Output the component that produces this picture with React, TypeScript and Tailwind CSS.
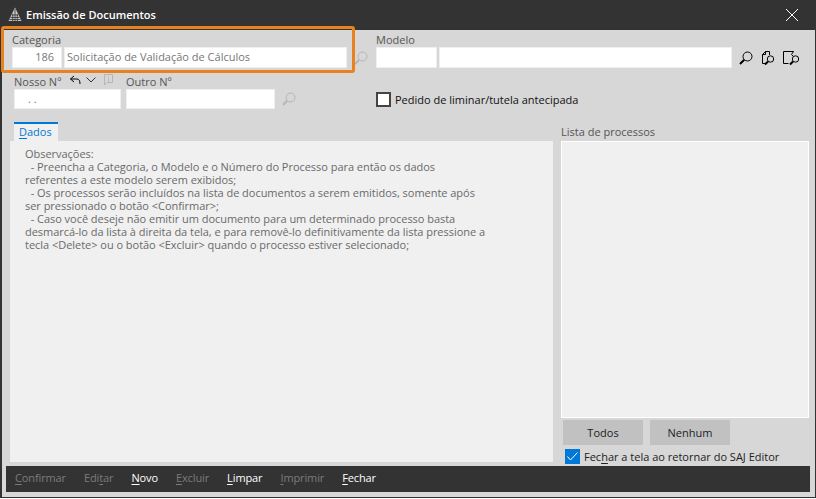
import React from "react";

const font = { fontFamily: '"Open Sans", "Noto Sans", sans-serif' };

function Lens({ className, color = "#000" }: { className?: string; color?: string }) {
  return (
    <svg width="14" height="14" viewBox="0 0 14 14" fill="none" stroke={color} className={className}>
      <circle cx="8.5" cy="5.5" r="4.5" strokeWidth="1" />
      <path d="M5.2 8.8 L1 13" strokeWidth="2" />
    </svg>
  );
}

function DocLens({ folded }: { folded?: boolean }) {
  return (
    <svg width="17" height="16" viewBox="0 0 17 16" fill="none" stroke="#000" strokeWidth="1">
      {folded ? (
        <path d="M5.5 13.5 H2.5 V4.5 L5.5 1.5 H9.5 V5 M5.5 1.5 V4.5 H2.5" />
      ) : (
        <path d="M5.5 13.5 H0.5 V1.5 H10.5 L8.5 4.5 L10.5 6.5" />
      )}
      <circle cx={folded ? 10.5 : 12.5} cy="9" r="3.2" />
      <path d={folded ? "M8 11.5 L5 14.5" : "M10 11.5 L7 14.5"} strokeWidth="2" />
    </svg>
  );
}

function Field({ w, value, align }: { w: string; value?: string; align?: string }) {
  return (
    <div className={`${w} ${align} h-[21px] bg-white border border-[#efefef] text-[11px] leading-[18px] text-[#777] whitespace-nowrap overflow-hidden`}>
      {value}
    </div>
  );
}

function Action({ pre, mark, rest, on }: { pre?: string; mark: string; rest: string; on?: boolean }) {
  return (
    <span className={`text-[11px] font-medium tracking-[-0.12px] ${on ? "text-white" : "text-[#7b7b7b]"}`}>
      {pre}
      <span className="underline underline-offset-2">{mark}</span>
      {rest}
    </span>
  );
}

export default function App() {
  return (
    <div className="w-[816px] h-[499px] bg-white overflow-hidden" style={font}>
      <div className="relative w-[816px] h-[498px] flex flex-col bg-[#d7d7d7] border-l-2 border-r border-b border-[#333]">
        {/* title bar */}
        <div className="h-[30px] -ml-[2px] -mr-[1px] shrink-0 bg-[#333] flex items-center pl-[8px] pr-[17px]">
          <svg width="14" height="15" viewBox="0 0 14 15" className="shrink-0 -mt-[1px]">
            <path d="M7 0.5 L13.5 14 H0.5 Z" fill="#c8c8c8" />
            <path d="M7 2 V14 M4.7 7 V14 M9.3 7 V14 M2.5 10.5 H11.5 M1.5 12.5 H12.5 M4 8 H10" stroke="#333" strokeWidth="0.8" />
          </svg>
          <span className="ml-[4px] text-[11px] font-semibold text-white">Emissão de Documentos</span>
          <svg width="14" height="14" viewBox="0 0 14 14" stroke="#fff" strokeWidth="1" className="ml-auto">
            <path d="M1 1 L13 13 M13 1 L1 13" />
          </svg>
        </div>

        {/* highlight */}
        <div className="absolute -left-[1px] top-[26px] w-[354px] h-[47px] border-[3px] border-[#e8821e] rounded-[3px]" />

        {/* row 1 */}
        <div className="flex h-[37px] shrink-0 pl-[10px]">
          <div className="w-[364px]">
            <div className="h-[17px] leading-[20px] text-[11px] text-[#555]">Categoria</div>
            <div className="flex items-center gap-[2px]">
              <Field w="w-[50px] pr-[7px]" value="186" align="text-right" />
              <Field w="w-[283px] pl-[2px]" value="Solicitação de Validação de Cálculos" />
              <Lens className="ml-[5px]" color="#b5b5b5" />
            </div>
          </div>
          <div>
            <div className="h-[17px] leading-[20px] text-[11px] text-[#555]">Modelo</div>
            <div className="flex items-center gap-[2px]">
              <Field w="w-[61px]" />
              <Field w="w-[293px]" />
              <div className="flex items-center ml-[5px] gap-[6px]">
                <Lens className="mr-[1px]" />
                <DocLens folded />
                <DocLens />
              </div>
            </div>
          </div>
        </div>

        {/* row 2 */}
        <div className="flex h-[53px] shrink-0 pt-[5px] pl-[12px]">
          <div className="w-[362px] flex">
            <div className="w-[112px]">
              <div className="h-[17px] flex items-start text-[11px] text-[#555]">
                <span className="w-[55px] leading-[20px]">Nosso Nº</span>
                <svg width="12" height="10" viewBox="0 0 12 10" fill="none" stroke="#000" className="mt-[3px]">
                  <path d="M5 1 L1.5 4 L5 7 M1.5 4 H8 Q11 4 11 9" />
                </svg>
                <svg width="10" height="6" viewBox="0 0 10 6" fill="none" stroke="#333" className="ml-[5px] mt-[5px]">
                  <path d="M0.5 0.5 L5 5 L9.5 0.5" />
                </svg>
                <svg width="9" height="12" viewBox="0 0 9 12" fill="none" stroke="#b5b5b5" className="ml-[8px] mt-[2px]">
                  <path d="M0.5 0.5 H8.5 V8.5 H3 L0.5 11 Z M4.5 2.5 V3.5 M4.5 4.5 V7.5" />
                </svg>
              </div>
              <div className="w-[107px] h-[20px] bg-white border border-[#efefef] pl-[13px] text-[11px] leading-[18px] text-[#777]">. .</div>
            </div>
            <div>
              <div className="h-[17px] leading-[20px] text-[11px] text-[#555]">Outro Nº</div>
              <div className="flex items-center">
                <div className="w-[149px] h-[20px] bg-white border border-[#efefef]" />
                <Lens className="ml-[7px]" color="#b5b5b5" />
              </div>
            </div>
          </div>
          <label className="flex items-center gap-[4px] h-[21px] mt-[17px] text-[11px] text-[#111]">
            <span className="w-[15px] h-[15px] bg-white border-2 border-[#444]" />
            <span className="mt-[2px]">Pedido de liminar/tutela antecipada</span>
          </label>
        </div>

        {/* main */}
        <div className="flex-1 min-h-0 flex pl-[8px]">
          <div className="w-[543px] flex flex-col">
            <div className="pl-[4px] h-[19px] shrink-0 mt-[2px]">
              <div className="w-[44px] h-[19px] bg-[#f0f0f0] border-t-2 border-[#0078d7] pl-[5px] text-[11px] leading-[15px] text-[#0078d7]">
                <span className="underline underline-offset-2">D</span>ados
              </div>
            </div>
            <div className="h-[321px] bg-[#f0f0f0] pl-[15px] pr-[20px] pt-[6px] text-[11px] tracking-[-0.03px] leading-[13px] text-[#6a6a6a]">
              <p>Observações:</p>
              <p className="whitespace-pre">  - Preencha a Categoria, o Modelo e o Número do Processo para então os dados</p>
              <p>referentes a este modelo serem exibidos;</p>
              <p className="whitespace-pre">  - Os processos serão incluídos na lista de documentos a serem emitidos, somente após</p>
              <p>ser pressionado o botão &lt;Confirmar&gt;;</p>
              <p className="whitespace-pre">  - Caso você deseje não emitir um documento para um determinado processo basta</p>
              <p>desmarcá-lo da lista à direita da tela, e para removê-lo definitivamente da lista pressione a</p>
              <p>tecla &lt;Delete&gt; ou o botão &lt;Excluir&gt; quando o processo estiver selecionado;</p>
            </div>
          </div>
          <div className="ml-[8px] w-[248px] flex flex-col">
            <div className="h-[21px] leading-[24px] text-[11px] text-[#555]">Lista de processos</div>
            <div className="h-[277px] bg-[#f0f0f0] border border-white" />
            <div className="flex gap-[7px] pl-[2px] mt-[2px]">
              <div className="w-[80px] h-[25px] bg-[#c1c1c1] text-center text-[11px] leading-[25px] text-[#222]">Todos</div>
              <div className="w-[80px] h-[25px] bg-[#c1c1c1] text-center text-[11px] leading-[25px] text-[#222]">Nenhum</div>
            </div>
            <label className="flex items-center gap-[4px] pl-[4px] mt-[4px] text-[11px] leading-[15px] text-[#222] whitespace-nowrap">
              <span className="w-[15px] h-[15px] bg-[#0078d7] flex items-center justify-center">
                <svg width="11" height="9" viewBox="0 0 11 9" fill="none" stroke="#fff"><path d="M0.5 4.5 L3.5 8 L10.5 0.5" /></svg>
              </span>
              <span>Fec<span className="underline underline-offset-2">h</span>ar a tela ao retornar do SAJ Editor</span>
            </label>
          </div>
        </div>

        {/* footer */}
        <div className="h-[26px] ml-[4px] mb-[5px] w-[804px] shrink-0 bg-[#333] flex items-center gap-[18px] pl-[9px] pb-[2px]">
          <Action mark="C" rest="onfirmar" />
          <Action pre="Edi" mark="t" rest="ar" />
          <Action mark="N" rest="ovo" on />
          <Action mark="E" rest="xcluir" />
          <Action mark="L" rest="impar" on />
          <Action mark="I" rest="mprimir" />
          <Action mark="F" rest="echar" on />
        </div>
      </div>
    </div>
  );
}
